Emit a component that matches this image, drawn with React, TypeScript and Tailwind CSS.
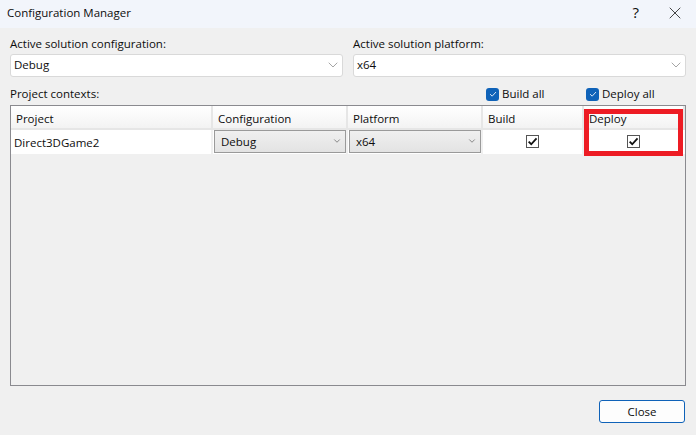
import { ChevronDown, X } from "lucide-react";

function Combo({ value }: { value: string }) {
  return (
    <div className="flex h-[23px] items-center justify-between rounded-[3px] border border-[#d9d9d9] bg-white pb-[2px] pl-[3px] pr-[1px]">
      <span>{value}</span>
      <ChevronDown className="h-[16px] w-[16px] text-[#777]" strokeWidth={1} />
    </div>
  );
}

function CellCombo({ value }: { value: string }) {
  return (
    <div className="flex h-[23px] items-center justify-between border border-[#9a9a9a] bg-gradient-to-b from-[#f0f0f0] to-[#e3e3e3] pl-[6px] pr-[3px] pt-[1px]">
      <span>{value}</span>
      <ChevronDown className="mb-[3px] h-[10px] w-[10px] text-[#666]" strokeWidth={1.8} />
    </div>
  );
}

function BlueCheck({ label }: { label: string }) {
  return (
    <div className="flex items-center gap-[3px]">
      <span className="flex h-[13px] w-[13px] items-center justify-center rounded-[3px] bg-[#0f62b8]">
        <svg viewBox="0 0 12 12" className="h-[10px] w-[10px]" fill="none" stroke="white" strokeWidth="1">
          <path d="M2.5 6.2 5 8.6 9.6 3.6" />
        </svg>
      </span>
      <span>{label}</span>
    </div>
  );
}

function GridCheck() {
  return (
    <span className="flex h-[13px] w-[13px] items-center justify-center border border-[#555] bg-white">
      <svg viewBox="0 0 12 12" className="h-[11px] w-[11px]" fill="none" stroke="#111" strokeWidth="2">
        <path d="M1.8 6.2 4.6 9 10.4 2.6" />
      </svg>
    </span>
  );
}

function HeaderCell({ label }: { label: string }) {
  return (
    <div className="flex h-[24px] items-center border-r-2 border-b-2 border-[#e6e6e6] bg-gradient-to-b from-white to-[#f3f3f3] pl-[5px] pt-[3px]">
      {label}
    </div>
  );
}

export default function App() {
  return (
    <div
      className="flex h-[435px] w-[696px] flex-col overflow-hidden bg-[#f0f0f0] text-[11.5px] leading-none text-[#0d0d0d]"
      style={{ fontFamily: '"Open Sans", "Noto Sans", sans-serif' }}
    >
      <div className="flex h-[28px] shrink-0 items-center justify-between bg-[#f2f5fb] pb-[3px] pl-[7px] pr-[11px]">
        <span>Configuration Manager</span>
        <div className="flex items-center gap-[26px]">
          <span className="text-[15px]">?</span>
          <X className="h-[20px] w-[20px] text-[#222]" strokeWidth={1} />
        </div>
      </div>

      <div className="flex min-h-0 flex-1 flex-col px-[10px] pt-[10px]">
        <div className="grid grid-cols-[333px_333px] gap-x-[10px]">
          <div>
            <div className="mb-[6px] h-[10px]">Active solution configuration:</div>
            <Combo value="Debug" />
          </div>
          <div>
            <div className="mb-[6px] h-[10px]">Active solution platform:</div>
            <Combo value="x64" />
          </div>
        </div>

        <div className="mt-[6px] flex h-[22px] items-center">
          <span className="w-[476px]">Project contexts:</span>
          <div className="w-[100px]"><BlueCheck label="Build all" /></div>
          <BlueCheck label="Deploy all" />
        </div>

        <div className="relative h-[281px] w-[676px] border border-[#8a8a8f] bg-[#f0f0f0]">
          <div className="grid grid-cols-[202px_135px_135px_101px_101px]">
            <HeaderCell label="Project" />
            <HeaderCell label="Configuration" />
            <HeaderCell label="Platform" />
            <HeaderCell label="Build" />
            <HeaderCell label="Deploy" />
            <div className="flex h-[24px] items-center border-r-2 border-[#f0f0f0] bg-white pl-[3px] pt-[1px]">Direct3DGame2</div>
            <div className="border-r-2 border-[#f0f0f0] bg-white pl-[1px]"><CellCombo value="Debug" /></div>
            <div className="border-r-2 border-[#f0f0f0] bg-white pl-[1px]"><CellCombo value="x64" /></div>
            <div className="flex items-center justify-center border-r-2 border-[#f0f0f0] bg-white pb-[2px]"><GridCheck /></div>
            <div className="flex items-center justify-center bg-white pb-[2px] pr-[2px]"><GridCheck /></div>
          </div>
          <div className="absolute left-[573px] top-[3px] h-[47px] w-[99px] border-[5px] border-[#ed1c24]" />
        </div>

        <div className="mt-[14px] flex justify-end pr-[1px]">
          <button className="h-[23px] w-[86px] rounded-[3px] border border-[#0f62b8] bg-[#fdfdfd]">Close</button>
        </div>
      </div>
    </div>
  );
}
